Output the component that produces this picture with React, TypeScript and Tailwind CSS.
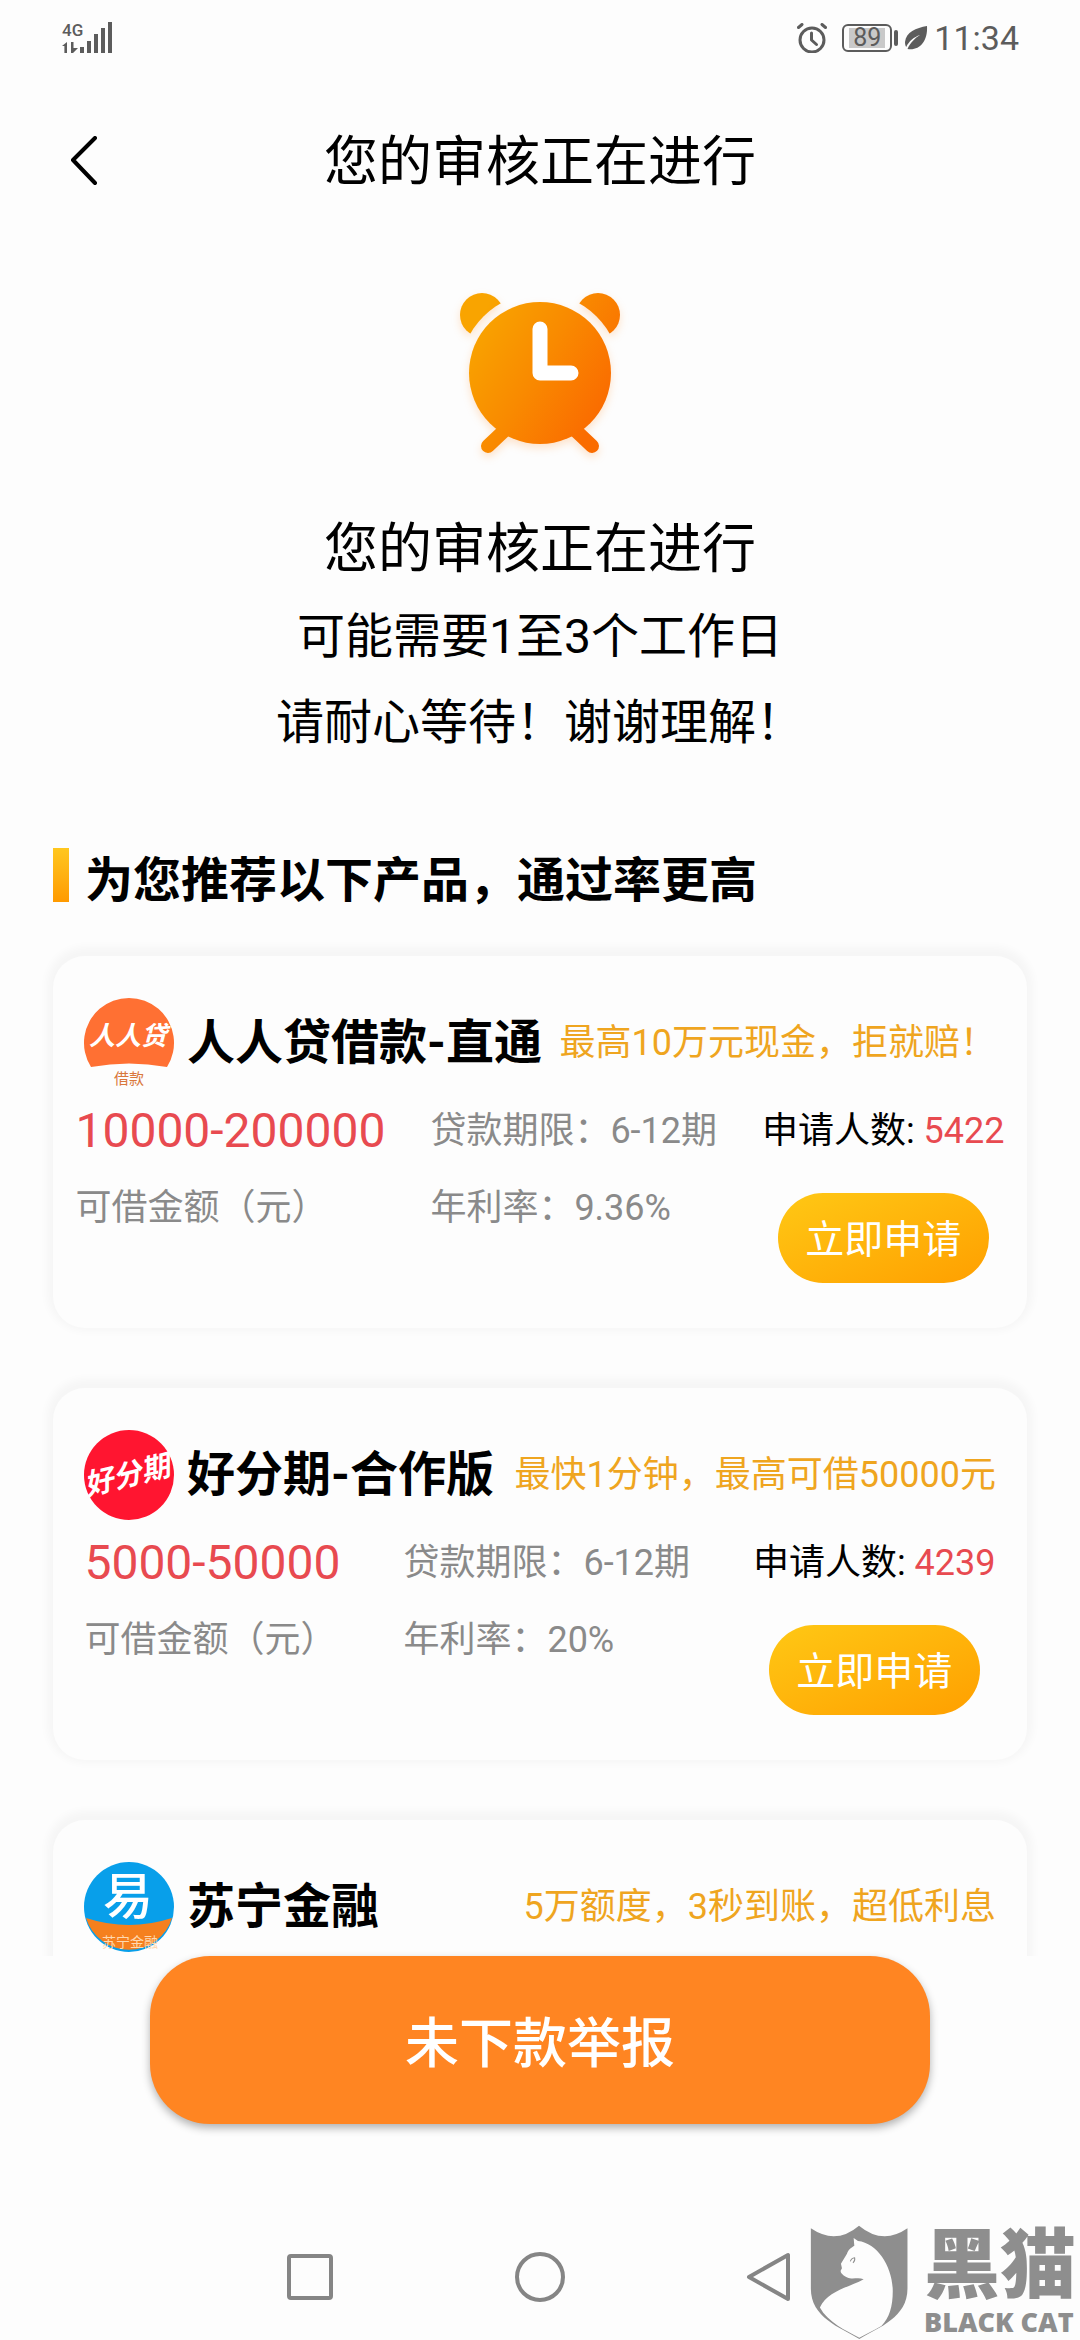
import React from 'react';

type Product = {
  name: string;
  logo: React.ReactNode;
  tag: string;
  offer?: { amount: string; term: string; rate: string; applicants: number };
};

function RenrendaiLogo() {
  return (
    <svg viewBox="0 0 90 90" className="size-[90px] shrink-0 overflow-visible" role="img" aria-label="人人贷">
      <path d="M7 69A45 45 0 1 1 83 69Q45 62 7 69Z" fill="#ff7033" />
      <text x="44" y="47" fontSize="26" fontWeight="700" fontStyle="italic" fill="#fff" textAnchor="middle">人人贷</text>
      <text x="45" y="86" fontSize="15" fill="#d9773c" textAnchor="middle">借款</text>
    </svg>
  );
}

function HaofenqiLogo() {
  return (
    <svg viewBox="0 0 90 90" className="size-[90px] shrink-0 overflow-visible" role="img" aria-label="好分期">
      <circle cx="45" cy="45" r="45" fill="#ff1530" />
      <text x="43" y="55" fontSize="29" fontWeight="700" fontStyle="italic" fill="#fff" textAnchor="middle" transform="rotate(-14 45 45)">好分期</text>
    </svg>
  );
}

function SuningLogo() {
  return (
    <svg viewBox="0 0 90 90" className="size-[90px] shrink-0 overflow-visible" role="img" aria-label="苏宁金融">
      <circle cx="45" cy="45" r="45" fill="#089fea" />
      <path d="M2 56Q45 70 88 56A45 45 0 0 1 2 56Z" fill="#f5801e" />
      <text x="44" y="52" fontSize="50" fontWeight="500" fill="#fff" textAnchor="middle">易</text>
      <text x="46" y="85" fontSize="14" fill="#ffd9b0" textAnchor="middle">苏宁金融</text>
    </svg>
  );
}

const products: Product[] = [
  {
    name: '人人贷借款-直通',
    logo: <RenrendaiLogo />,
    tag: '最高10万元现金，拒就赔！',
    offer: { amount: '10000-200000', term: '6-12期', rate: '9.36%', applicants: 5422 },
  },
  {
    name: '好分期-合作版',
    logo: <HaofenqiLogo />,
    tag: '最快1分钟，最高可借50000元',
    offer: { amount: '5000-50000', term: '6-12期', rate: '20%', applicants: 4239 },
  },
  { name: '苏宁金融', logo: <SuningLogo />, tag: '5万额度，3秒到账，超低利息' },
];

function StatusBar() {
  return (
    <div className="flex h-[76px] shrink-0 items-center justify-between pl-[62px] pr-[61px] text-[#5c5c5c]">
      <svg viewBox="0 0 52 32" className="h-8 w-[52px] overflow-visible" fill="currentColor">
        <text x="0" y="14" fontSize="17" fontWeight="500">4G</text>
        <path d="M5 20v11H2.400V24H0zM9 20h2.500v6H16l-5 5H9z" />
        <rect x="18" y="25" width="4" height="6" />
        <rect x="25" y="19" width="4" height="12" />
        <rect x="32" y="12" width="4" height="19" />
        <rect x="39" y="6" width="4" height="25" />
        <rect x="46" y="0" width="4" height="31" />
      </svg>
      <div className="flex items-center">
        <svg viewBox="0 0 30 30" className="size-[30px]" fill="none" stroke="currentColor" strokeLinecap="round">
          <circle cx="15" cy="17" r="12" strokeWidth="3" />
          <path d="M14.500 10v7l5 4.500" strokeWidth="3" strokeLinejoin="round" />
          <path d="M1.500 4.500 5 1.500M28.500 4.500 25 1.500" strokeWidth="3" />
        </svg>
        <div className="ml-[15px] flex h-7 w-[50px] items-center justify-center rounded-md border-2 border-current">
          <span className="bg-[#c9c9c9] px-1 text-[25px] leading-5">89</span>
        </div>
        <div className="ml-[2px] h-4 w-1 rounded-sm bg-current" />
        <svg viewBox="0 0 24 26" className="ml-1.5 h-[26px] w-6" fill="currentColor">
          <path d="M23 1C12 3 2 7 1 17c0 2 .5 4 1.200 5C5 16 10 12 16 10 11 13 6 18 3.500 24 15 26 24 17 23 1Z" />
        </svg>
        <span className="ml-1.5 text-[34px] leading-10">11:34</span>
      </div>
    </div>
  );
}

function AlarmClock() {
  return (
    <svg viewBox="0 0 160 162" className="h-[162px] w-40 overflow-visible drop-shadow-[0_4px_4px_rgba(255,120,0,0.2)]">
      <defs>
        <linearGradient id="clock" gradientUnits="userSpaceOnUse" x1="10" y1="40" x2="140" y2="120">
          <stop offset="0" stopColor="#f9a400" />
          <stop offset="0.5" stopColor="#f98a00" />
          <stop offset="1" stopColor="#fa6c00" />
        </linearGradient>
        <mask id="bells" maskUnits="userSpaceOnUse" x="-5" y="-5" width="170" height="170">
          <rect x="-5" y="-5" width="170" height="170" fill="#fff" />
          <circle cx="80" cy="80" r="80" fill="#000" />
        </mask>
      </defs>
      <g fill="url(#clock)" mask="url(#bells)">
        <circle cx="22" cy="22" r="22" />
        <circle cx="138" cy="22" r="22" />
      </g>
      <circle cx="80" cy="80" r="71" fill="url(#clock)" />
      <path d="m46 136-18 17M114 136l18 17" stroke="url(#clock)" strokeWidth="14" strokeLinecap="round" />
      <path d="M80 36v44h31" fill="none" stroke="#fff" strokeWidth="15" strokeLinecap="round" strokeLinejoin="round" />
    </svg>
  );
}

function ProductCard({ product }: { product: Product }) {
  const { name, logo, tag, offer } = product;

  return (
    <article className="rounded-[32px] bg-[#fdfdfd] pt-[42px] pb-[45px] shadow-[0_-3px_8px_6px_rgba(0,0,0,0.03)]">
      <div className="flex items-center px-[31px]">
        {logo}
        <h3 className="ml-[13px] text-[48px] leading-[60px] font-bold whitespace-nowrap text-black">{name}</h3>
        <p className="ml-auto text-[36px] leading-[54px] whitespace-nowrap text-[#efa51f]">{tag}</p>
      </div>
      {offer && (
        <div className="mt-[13px] flex justify-around whitespace-nowrap text-[36px] text-[#8a8a8a]">
          <div>
            <p className="text-[48px] leading-[60px] text-[#e84a50]">{offer.amount}</p>
            <p className="mt-5 leading-[54px]">可借金额（元）</p>
          </div>
          <div>
            <p className="leading-[60px]">贷款期限：{offer.term}</p>
            <p className="mt-5 leading-[54px]">年利率：{offer.rate}</p>
          </div>
          <div className="flex flex-col items-center">
            <p className="leading-[60px] text-black">
              申请人数: <span className="text-[#e84a50]">{offer.applicants}</span>
            </p>
            <button
              type="button"
              className="mt-8 h-[90px] w-[211px] rounded-full bg-linear-to-br from-[#ffc814] to-[#ff9f00] pt-1 text-[39px] text-white"
            >
              立即申请
            </button>
          </div>
        </div>
      )}
    </article>
  );
}

function NavBar() {
  return (
    <nav className="flex h-[126px] shrink-0 items-center justify-center gap-[180px]">
      <button type="button" aria-label="最近任务">
        <svg viewBox="0 0 50 50" className="size-[50px]" fill="none" stroke="#858585" strokeWidth="4">
          <rect x="4" y="4" width="42" height="42" rx="2" />
        </svg>
      </button>
      <button type="button" aria-label="主页">
        <svg viewBox="0 0 50 50" className="size-[50px]" fill="none" stroke="#858585" strokeWidth="4">
          <circle cx="25" cy="25" r="23" />
        </svg>
      </button>
      <button type="button" aria-label="返回">
        <svg viewBox="0 0 50 50" className="size-[50px]" fill="none" stroke="#858585" strokeWidth="4" strokeLinejoin="round">
          <path d="M43 3v44L4 25Z" />
        </svg>
      </button>
    </nav>
  );
}

function Watermark() {
  return (
    <div className="pointer-events-none absolute right-0 bottom-0 flex items-end text-[#8e8e8e]">
      <svg viewBox="213 74 292 344" className="h-[115px] w-[98px]">
        <path
          d="M215 84Q290 135 359 76 430 135 504 84V265C504 350 420 380 360 415 300 380 215 350 215 265Z"
          fill="#8e8e8e"
        />
        <path
          d="M343 113l13 9c60 6 104 80 104 150 0 45-10 80-34 104-26 16-48 25-66 35-40-20-95-47-118-90 22-50 86-60 131-85-17-6-36 2-49-5-12-6-20-12-20-20l4-8-3-13 18-30c4-14 16-20 22-24Z"
          fill="#fdfdfd"
        />
        <path d="M333 183q3-10 13-11 2 9-5 15" fill="none" stroke="#8e8e8e" strokeWidth="3" />
      </svg>
      <div className="ml-4 flex w-[156px] flex-col">
        <span className="text-[76px] leading-[76px] font-black whitespace-nowrap">黑猫</span>
        <span className="font-['Open_Sans'] text-[27px] leading-[36px] font-extrabold whitespace-nowrap">BLACK CAT</span>
      </div>
    </div>
  );
}

export default function App() {
  return (
    <div className="relative flex h-screen flex-col overflow-hidden bg-[#fdfdfd] font-[Roboto,'Noto_Sans_CJK_SC',sans-serif] text-black">
      <StatusBar />
      <header className="relative flex h-[174px] shrink-0 items-center justify-center">
        <button type="button" aria-label="返回" className="absolute left-[66px]">
          <svg viewBox="0 0 36 54" className="h-[54px] w-9" fill="none" stroke="#000" strokeWidth="4" strokeLinecap="round" strokeLinejoin="round">
            <path d="M29 2 7 24l22 23" />
          </svg>
        </button>
        <h1 className="text-[54px] leading-[80px]">您的审核正在进行</h1>
      </header>

      <main className="flex-1 overflow-y-auto [scrollbar-width:none]">
        <section className="flex flex-col items-center pt-[43px]">
          <AlarmClock />
          <h2 className="mt-[55px] text-[54px] leading-[80px]">您的审核正在进行</h2>
          <p className="mt-1 text-[48px] leading-[86px]">可能需要1至3个工作日</p>
          <p className="text-[48px] leading-[86px]">请耐心等待！谢谢理解！</p>
        </section>

        <section className="mt-[82px] px-[53px]">
          <div className="flex h-[54px] items-center">
            <div className="h-full w-4 bg-linear-to-b from-[#ffc71e] to-[#ff9a00]" />
            <h2 className="ml-4 pt-3 text-[48px] leading-[60px] font-bold whitespace-nowrap">为您推荐以下产品，通过率更高</h2>
          </div>
          <div className="mt-[54px] flex flex-col gap-[60px] pb-[60px]">
            {products.map((product) => (
              <ProductCard key={product.name} product={product} />
            ))}
          </div>
        </section>
      </main>

      <div className="shrink-0 px-[150px] pb-[90px]">
        <button
          type="button"
          className="h-[168px] w-full rounded-[60px] bg-[#ff8522] pt-2 text-[54px] font-medium text-white shadow-[0_4px_8px_rgba(0,0,0,0.3)]"
        >
          未下款举报
        </button>
      </div>
      <NavBar />
      <Watermark />
    </div>
  );
}
